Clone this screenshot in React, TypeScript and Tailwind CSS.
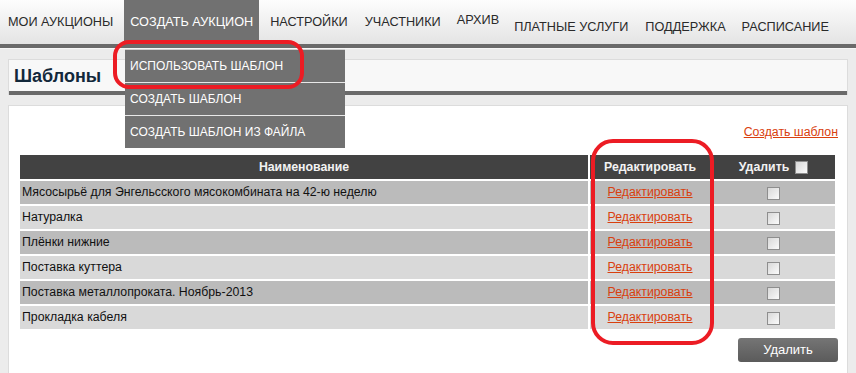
import React from "react";

const rows = [
  "Мясосырьё для Энгельсского мясокомбината на 42-ю неделю",
  "Натуралка",
  "Плёнки нижние",
  "Поставка куттера",
  "Поставка металлопроката. Ноябрь-2013",
  "Прокладка кабеля",
];

function Box() {
  return (
    <span className="inline-block w-[13px] h-[13px] border border-[#8e8e8e] bg-gradient-to-br from-[#d8d8d8] to-[#fbfbfb] align-middle" />
  );
}

export default function App() {
  return (
    <div
      className="relative w-[856px] h-[373px] overflow-hidden bg-[#ececec]"
      style={{ fontFamily: '"Liberation Sans", Arial, sans-serif' }}
    >
      {/* Nav */}
      <div className="h-[44px] bg-gradient-to-b from-[#fdfdfd] to-[#e4e4e4] flex text-[12.7px] text-[#2a2a2a] pl-[8px] whitespace-nowrap">
        <div className="pt-[13px] pr-[11px]">МОИ АУКЦИОНЫ</div>
        <div className="pt-[13px] px-[6px] bg-[#717171] text-white">СОЗДАТЬ АУКЦИОН</div>
        <div className="pt-[13px] pl-[11px] pr-[17px]">НАСТРОЙКИ</div>
        <div className="pt-[13px] pr-[16px]">УЧАСТНИКИ</div>
        <div className="pt-[11px] pr-[15px]">АРХИВ</div>
        <div className="pt-[18px] pr-[17px]">ПЛАТНЫЕ УСЛУГИ</div>
        <div className="pt-[18px] pr-[16px]">ПОДДЕРЖКА</div>
        <div className="pt-[18px]">РАСПИСАНИЕ</div>
      </div>
      <div className="h-[4px] bg-[#6a6a6a]" />
      <div className="h-[1px] bg-[#f6f6f6]" />

      {/* Main */}
      <div className="px-[8px] pt-[10px] w-[856px]">
        <div className="h-[36px] border border-[#dcdcdc] border-b-0 bg-[#f8f8f8] flex flex-col">
          <div className="flex-1 pl-[5px] pt-[6px] text-[18px] font-bold text-[#12283b] leading-[20px]">
            Шаблоны
          </div>
          <div className="h-[4px] bg-[#6a6a6a]" />
        </div>
        <div className="mt-[10px] h-[280px] border border-[#dcdcdc] bg-white px-[9px]">
          <div className="flex justify-end pt-[19px] h-[47px]">
            <a className="text-[12.3px] text-[#d9400e] underline leading-[15px]">Создать шаблон</a>
          </div>
          <table className="w-[819px] border-separate border-spacing-[2px] text-[12.3px]">
            <thead>
              <tr className="bg-[#424242] text-[#f2f2f2] font-bold h-[24px]">
                <th className="font-bold w-[568px]">Наименование</th>
                <th className="font-bold w-[120px]">Редактировать</th>
                <th className="font-bold">
                  <span className="inline-flex items-center gap-[6px]">
                    Удалить <Box />
                  </span>
                </th>
              </tr>
            </thead>
            <tbody>
              {rows.map((r, i) => (
                <tr
                  key={r}
                  className={`h-[23px] ${i % 2 === 0 ? "bg-[#bbbbbb]" : "bg-[#d9d9d9]"} text-[#111]`}
                >
                  <td className="pl-[2px] p-0">{r}</td>
                  <td className="text-center p-0">
                    <a className="text-[#d9400e] underline">Редактировать</a>
                  </td>
                  <td className="text-center p-0">
                    <Box />
                  </td>
                </tr>
              ))}
            </tbody>
          </table>
          <div className="flex justify-end mt-[7px]">
            <button className="w-[100px] h-[24px] rounded-[3px] bg-gradient-to-b from-[#757575] to-[#5b5b5b] text-white text-[13px]">
              Удалить
            </button>
          </div>
        </div>
      </div>

      {/* Dropdown */}
      <div className="absolute left-[125px] top-[49px] w-[220px] bg-[#717171] text-white text-[12px] border-t border-[#cfcfcf] whitespace-nowrap">
        <div className="h-[33px] pl-[5px] pt-[7px] border-b border-[#e8e8e8]">ИСПОЛЬЗОВАТЬ ШАБЛОН</div>
        <div className="h-[33px] pl-[5px] pt-[7px] border-b border-[#e8e8e8]">СОЗДАТЬ ШАБЛОН</div>
        <div className="h-[32px] pl-[5px] pt-[7px]">СОЗДАТЬ ШАБЛОН ИЗ ФАЙЛА</div>
      </div>

      {/* Annotations */}
      <div className="absolute left-[113px] top-[40px] w-[191px] h-[49px] border-[4px] border-[#ec1c24] rounded-[16px]" />
      <div className="absolute left-[591px] top-[139px] w-[123px] h-[206px] border-[4px] border-[#ec1c24] rounded-[22px]" />
    </div>
  );
}
